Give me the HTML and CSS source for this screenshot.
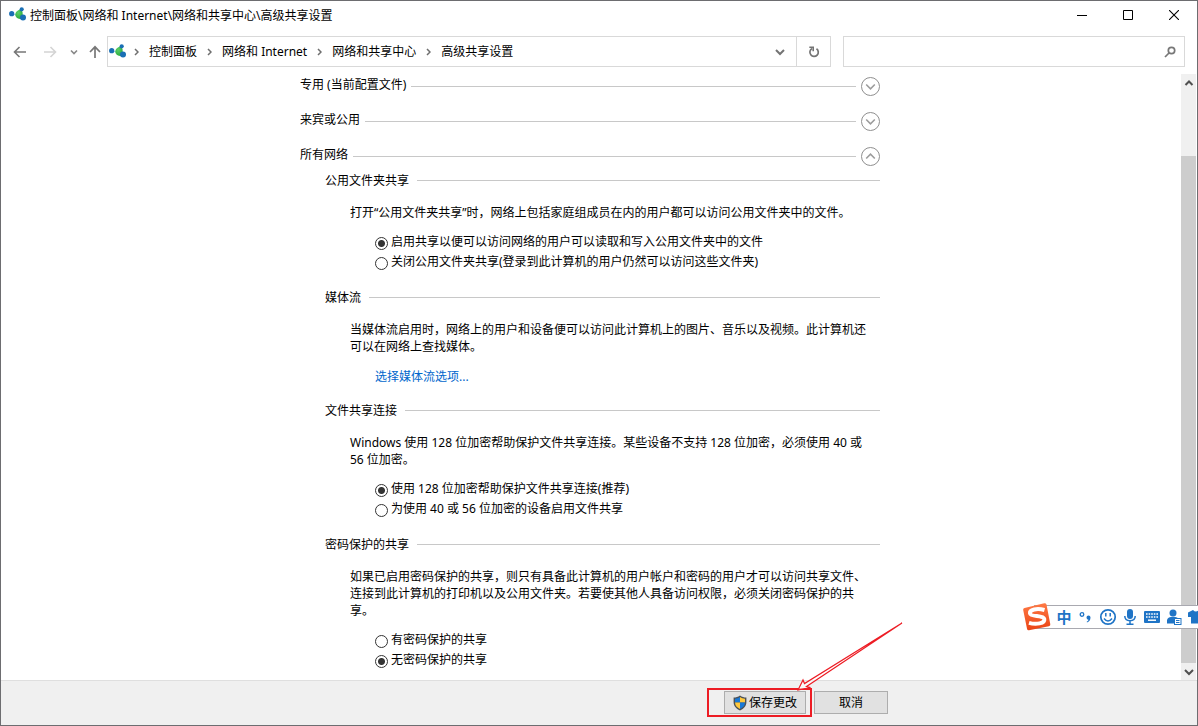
FILE: index.html
```html
<!DOCTYPE html>
<html lang="zh-CN">
<head>
<meta charset="utf-8">
<title>高级共享设置</title>
<link rel="stylesheet" href="styles.css">
</head>
<body>
<svg class="defs" aria-hidden="true">
  <defs>
    <radialGradient id="green" cx="40%" cy="35%" r="70%"><stop offset="0" stop-color="#5fd068"/><stop offset="1" stop-color="#25a83a"/></radialGradient>
    <linearGradient id="orange" x1="0" y1="0" x2="0" y2="1"><stop offset="0" stop-color="#ff7a45"/><stop offset="1" stop-color="#ea4415"/></linearGradient>
    <symbol id="network" viewBox="0 0 18 16">
      <path d="M3 7 9 8 13 3M9 8 14 11" stroke="#9fd8e8" stroke-width="1" fill="none"/>
      <path d="M12 2.500C8 3 5.500 6 6.500 9 8 12 11 12.500 14 11.500L13.500 5Z" fill="url(#green)"/>
      <circle cx="2.700" cy="6.700" r="2.600" fill="#1a6fb5"/>
      <circle cx="12.700" cy="2.300" r="2.100" fill="#1a6fb5"/>
      <circle cx="14" cy="10.500" r="3" fill="#1a6fb5"/>
    </symbol>
    <symbol id="crumb" viewBox="0 0 5 8"><path d="M1 1 4 4 1 7" fill="none" stroke="#6f6f6f" stroke-width="1.500"/></symbol>
    <symbol id="down" viewBox="0 0 10 10"><path d="M1 3 5 7 9 3" fill="none" stroke="currentColor" stroke-width="2"/></symbol>
    <symbol id="up" viewBox="0 0 10 10"><path d="M1.500 7 5 3.500 8.500 7" fill="none" stroke="currentColor" stroke-width="2"/></symbol>
    <symbol id="expand" viewBox="0 0 11 11"><path d="M1.200 3.500 5.500 7.800 9.800 3.500" fill="none" stroke="currentColor" stroke-width="1.600"/></symbol>
    <symbol id="collapse" viewBox="0 0 11 11"><path d="M1.200 7.500 5.500 3.200 9.800 7.500" fill="none" stroke="currentColor" stroke-width="1.600"/></symbol>
  </defs>
</svg>
<div class="window">
  <header class="titlebar">
    <svg class="network" aria-hidden="true"><use href="#network"/></svg>
    <h1 class="title">控制面板\网络和 Internet\网络和共享中心\高级共享设置</h1>
    <button class="caption" aria-label="最小化"><svg width="10" height="10"><path d="M0 5.500H10" stroke="#000"/></svg></button>
    <button class="caption" aria-label="最大化"><svg width="10" height="10"><path d="M.5.5H9.500V9.500H.5Z" stroke="#000" fill="none"/></svg></button>
    <button class="caption" aria-label="关闭"><svg width="10" height="10"><path d="M0 0 10 10M10 0 0 10" stroke="#000" stroke-width="1.100"/></svg></button>
  </header>

  <nav class="navbar">
    <div class="history">
      <button class="plain" aria-label="后退"><svg width="14" height="12"><path d="M13 6H2M6.500 1 1.500 6 6.500 11" fill="none" stroke="#777" stroke-width="1.600"/></svg></button>
      <button class="plain forward" aria-label="前进"><svg width="14" height="12"><path d="M1 6H12M7.500 1 12.500 6 7.500 11" fill="none" stroke="#d4d4d4" stroke-width="1.600"/></svg></button>
      <button class="plain recent" aria-label="最近的位置"><svg width="8" height="6"><path d="M1 1.500 4 4.500 7 1.500" fill="none" stroke="#888" stroke-width="1.600"/></svg></button>
      <button class="plain" aria-label="向上"><svg width="12" height="14"><path d="M6 13V2M1 7 6 1.800 11 7" fill="none" stroke="#777" stroke-width="1.700"/></svg></button>
    </div>
    <div class="address">
      <div class="crumbs">
        <svg class="network" aria-hidden="true"><use href="#network"/></svg>
        <svg class="sep" aria-hidden="true"><use href="#crumb"/></svg>
        <a href="#">控制面板</a>
        <svg class="sep" aria-hidden="true"><use href="#crumb"/></svg>
        <a href="#">网络和 Internet</a>
        <svg class="sep" aria-hidden="true"><use href="#crumb"/></svg>
        <a href="#">网络和共享中心</a>
        <svg class="sep" aria-hidden="true"><use href="#crumb"/></svg>
        <a href="#">高级共享设置</a>
      </div>
      <button class="plain drop" aria-label="以前的位置"><svg width="10" height="10"><use href="#down"/></svg></button>
      <button class="plain refresh" aria-label="刷新"><svg width="12" height="12"><path d="M8.500 2.800A4.200 4.200 0 1 1 4 2.600" fill="none" stroke="#747474" stroke-width="1.700"/><path d="M1.300 1.300H5.200V5.300" fill="none" stroke="#747474" stroke-width="1.600"/></svg></button>
    </div>
    <div class="search">
      <input type="search" aria-label="搜索控制面板">
      <button class="plain" aria-label="搜索"><svg width="12" height="12"><circle cx="7.500" cy="4.500" r="3.200" fill="none" stroke="#777" stroke-width="1.700"/><path d="M5 7 1 11" stroke="#777" stroke-width="1.700"/></svg></button>
    </div>
  </nav>

  <div class="viewport">
    <main class="content">
      <div class="profiles">
        <h2 class="profile"><span>专用 (当前配置文件)</span><i></i><button class="toggle" aria-label="展开专用"><svg width="11" height="11"><use href="#expand"/></svg></button></h2>
        <h2 class="profile"><span>来宾或公用</span><i></i><button class="toggle" aria-label="展开来宾或公用"><svg width="11" height="11"><use href="#expand"/></svg></button></h2>
        <h2 class="profile"><span>所有网络</span><i></i><button class="toggle" aria-label="折叠所有网络"><svg width="11" height="11"><use href="#collapse"/></svg></button></h2>
      </div>
      <div class="sections">
        <section>
          <h3 class="group">公用文件夹共享</h3>
          <p>打开“公用文件夹共享”时，网络上包括家庭组成员在内的用户都可以访问公用文件夹中的文件。</p>
          <div class="options">
            <label><input type="radio" name="public" checked><span>启用共享以便可以访问网络的用户可以读取和写入公用文件夹中的文件</span></label>
            <label><input type="radio" name="public"><span>关闭公用文件夹共享(登录到此计算机的用户仍然可以访问这些文件夹)</span></label>
          </div>
        </section>
        <section>
          <h3 class="group">媒体流</h3>
          <p>当媒体流启用时，网络上的用户和设备便可以访问此计算机上的图片、音乐以及视频。此计算机还可以在网络上查找媒体。</p>
          <a class="link" href="#">选择媒体流选项...</a>
        </section>
        <section>
          <h3 class="group">文件共享连接</h3>
          <p>Windows 使用 128 位加密帮助保护文件共享连接。某些设备不支持 128 位加密，必须使用 40 或 56 位加密。</p>
          <div class="options">
            <label><input type="radio" name="cipher" checked><span>使用 128 位加密帮助保护文件共享连接(推荐)</span></label>
            <label><input type="radio" name="cipher"><span>为使用 40 或 56 位加密的设备启用文件共享</span></label>
          </div>
        </section>
        <section>
          <h3 class="group">密码保护的共享</h3>
          <p>如果已启用密码保护的共享，则只有具备此计算机的用户帐户和密码的用户才可以访问共享文件、连接到此计算机的打印机以及公用文件夹。若要使其他人具备访问权限，必须关闭密码保护的共享。</p>
          <div class="options">
            <label><input type="radio" name="password"><span>有密码保护的共享</span></label>
            <label><input type="radio" name="password" checked><span>无密码保护的共享</span></label>
          </div>
        </section>
      </div>
    </main>
    <div class="scrollbar">
      <button class="plain" aria-label="向上滚动"><svg width="10" height="10"><use href="#up"/></svg></button>
      <div class="track"></div>
      <div class="thumb"></div>
      <button class="plain" aria-label="向下滚动"><svg width="10" height="10"><use href="#down"/></svg></button>
    </div>
  </div>

  <footer class="footer">
    <div class="actions">
      <div class="marked">
        <button class="push"><svg width="14" height="16" viewBox="0 0 14 16" aria-hidden="true"><path d="M7 .5C5 2 3 2.500.6 2.500V7C.6 11 3 13.800 7 15.500 11 13.800 13.400 11 13.400 7V2.500C11 2.500 9 2 7 .5Z" fill="#4b5157"/><path d="M7 2C5.500 3 3.800 3.600 2 3.700V7.500H7Z" fill="#1778d8"/><path d="M7 2C8.500 3 10.200 3.600 12 3.700V7.500H7Z" fill="#ffc83d"/><path d="M2 7.500H7V14C4 12.600 2.200 10.600 2 7.500Z" fill="#ffc83d"/><path d="M12 7.500H7V14C10 12.600 11.800 10.600 12 7.500Z" fill="#1778d8"/></svg>保存更改</button>
        <svg class="arrow" width="106" height="70" viewBox="0 0 106 70" aria-hidden="true"><path d="M105 1 7.500 61.500 6 58 1 68 13.500 65.500 9.500 64.500Z" fill="#fff" fill-opacity=".6" stroke="#ed1c24" stroke-width="1.200"/></svg>
      </div>
      <button class="push cancel">取消</button>
    </div>
  </footer>
</div>

<aside class="ime">
  <svg class="sogou" width="30" height="30" viewBox="0 0 30 30" aria-hidden="true"><path d="M2.500 6Q.8 6.400 1.200 8L5 26.800Q5.400 28.600 7 28.300L26.800 24.300Q28.600 23.800 28.300 22.200L24.500 2.600Q24 .9 22.200 1.300Z" fill="url(#orange)"/><path d="M22.500 8C15 6 7.300 7.500 8 11.500 8.700 15.300 21.500 12.700 22.300 17 23 21.500 14 22.800 7 20.800" fill="none" stroke="#fff" stroke-width="4"/></svg>
  <div class="tools">
    <button class="plain zh">中</button>
    <button class="plain" aria-label="标点"><svg width="18" height="18"><circle cx="5" cy="6.500" r="1.800" fill="none" stroke="#1f74c6" stroke-width="1.300"/><path d="M9.500 9.500A2 2 0 0 1 13.500 9.500C13.500 12 12 14 10 14.500L9.700 13.700C10.800 13.200 11.500 12.500 11.500 11.700 10.300 11.700 9.500 10.700 9.500 9.500Z" fill="#1f74c6"/></svg></button>
    <button class="plain" aria-label="表情"><svg width="18" height="18"><circle cx="9" cy="9" r="7.200" fill="none" stroke="#1f74c6" stroke-width="1.700"/><path d="M6.800 5V8.500M11.200 5V8.500M5 10.500Q9 15.500 13 10.500" fill="none" stroke="#1f74c6" stroke-width="1.500"/></svg></button>
    <button class="plain" aria-label="语音"><svg width="18" height="18"><rect x="6" y="1" width="6" height="10" rx="3" fill="#1f74c6"/><path d="M3.800 8Q3.800 12.700 9 12.700T14.200 8M9 13V16M5.500 16.200H12.500" fill="none" stroke="#1f74c6" stroke-width="1.500"/></svg></button>
    <button class="plain" aria-label="软键盘"><svg width="18" height="18"><rect x="1" y="3" width="16" height="12" rx="1" fill="#1f74c6"/><path d="M3 6H15M3 9H15" stroke="#fff" stroke-width="1.600" stroke-dasharray="1.600 1"/><path d="M5 12.200H13" stroke="#fff" stroke-width="1.500"/></svg></button>
    <button class="plain" aria-label="用户"><svg width="18" height="18"><circle cx="8" cy="5" r="3.500" fill="#1f74c6"/><path d="M2 15.500V12Q3 8.700 8 8.700T14 12V15.500Z" fill="#1f74c6"/><rect x="9.500" y="10.500" width="6.500" height="6" fill="#fff" stroke="#1f74c6"/><path d="M11 12.500H14.500M11 14.500H14.500" stroke="#1f74c6"/></svg></button>
    <button class="plain" aria-label="皮肤"><svg width="18" height="18"><path d="M6 2 1 4.500V9H4V15.500H14V9H17V4.500L12 2Q9 5 6 2Z" fill="#1f74c6"/></svg></button>
  </div>
</aside>
</body>
</html>
```
FILE: styles.css
```css
* { box-sizing: border-box; }

body {
  margin: 0;
  position: relative;
  overflow: hidden;
  background: #fff;
  color: #000;
  font: 12px/17px "Noto Sans", "Noto Sans CJK SC", sans-serif;
}

h1, h2, h3, p { margin: 0; font-size: 12px; font-weight: 400; }
svg { display: block; flex: none; }
button, input { font: inherit; color: inherit; }
a { color: inherit; text-decoration: none; }
.defs { position: absolute; width: 0; height: 0; }

.plain {
  display: flex;
  align-items: center;
  justify-content: center;
  padding: 0;
  border: 0;
  background: none;
  color: #747474;
}

.window {
  display: flex;
  flex-direction: column;
  min-height: 100vh;
  border: 1px solid #6d6d70;
}

.titlebar { display: flex; align-items: center; height: 30px; padding: 0 0 2px 8px; }
.network { width: 18px; height: 16px; }
.title { flex: 1; padding-left: 3px; }
.caption {
  display: flex;
  align-items: center;
  justify-content: center;
  width: 46px;
  height: 28px;
  padding: 0;
  border: 0;
  background: none;
}

.navbar { display: flex; gap: 12px; height: 43px; padding: 5px 12px 7px 12px; }
.history { display: flex; align-items: center; gap: 16px; margin-right: -6px; }
.recent { margin: 0 -5px 0 -3px; }
.address { display: flex; flex: 1; border: 1px solid #d9d9d9; }
.crumbs { display: flex; flex: 1; align-items: center; gap: 10px; padding-left: 1px; }
.crumbs .network { margin-right: -3px; }
.crumbs a { padding-bottom: 1px; }
.sep { width: 5px; height: 8px; }
.drop { width: 32px; }
.refresh { width: 34px; border-left: 1px solid #d9d9d9; }
.search { display: flex; flex: 0 1 342px; padding-right: 8px; border: 1px solid #d9d9d9; }
.search input { flex: 1; min-width: 0; border: 0; outline: 0; background: none; }

.viewport { display: flex; flex: 1; }
.content { flex: 1; max-width: 582px; margin: 0 auto; padding: 3px 2px 10px 0; }
.profiles { display: flex; flex-direction: column; gap: 16px; }
.profile { display: flex; align-items: center; gap: 5px; height: 19px; }
.profile span { padding-bottom: 4px; }
.profile i { flex: 1; height: 1px; background: #c8c8c8; }
.toggle {
  display: flex;
  align-items: center;
  justify-content: center;
  width: 19px;
  height: 19px;
  padding: 0;
  border: 1px solid #8f8f8f;
  border-radius: 50%;
  background: #fff;
  color: #9c9c9c;
}

.sections { display: flex; flex-direction: column; gap: 17px; padding: 6px 0 0 25px; }
.group { display: flex; align-items: center; gap: 8px; }
.group::after { content: ""; flex: 1; height: 1px; background: #c8c8c8; }
.sections p { padding: 15px 4px 0 25px; }
.options { display: flex; flex-direction: column; padding: 11px 0 0 50px; }
.options label { display: flex; align-items: center; gap: 3px; height: 20px; }
.options span { padding-bottom: 1px; }
.options input {
  appearance: none;
  width: 13px;
  height: 13px;
  margin: 2px 0 0;
  border: 1px solid #333;
  border-radius: 50%;
  background: #fff;
}
.options input:checked { background: radial-gradient(circle, #333 3px, #fff 4px); }
.link { display: block; padding: 13px 0 0 50px; color: #0066cc; }

.scrollbar { display: flex; flex-direction: column; width: 16px; border-right: 1px solid #fff; background: #f0f0f0; }
.scrollbar button { height: 17px; color: #505050; }
.track { flex: 65; }
.thumb { flex: 507; background: #cdcdcd; }

.footer { height: 45px; border-top: 1px solid #dfdfdf; background: #f0f0f0; }
.actions { display: flex; align-items: center; justify-content: flex-end; gap: 2px; max-width: 578px; height: 43px; margin: 0 auto; }
.marked { position: relative; padding: 1px 4px 1px 15px; border: 2px solid #ed1c24; }
.push {
  display: flex;
  align-items: center;
  justify-content: center;
  gap: 2px;
  width: 82px;
  height: 23px;
  padding: 0;
  border: 1px solid #adadad;
  background: #e1e1e1;
}
.cancel { width: 74px; }
.arrow { position: absolute; right: -93px; bottom: 23px; }

.ime { position: absolute; top: 602px; right: 0; display: flex; align-items: center; width: 176px; height: 30px; overflow: hidden; }
.sogou { position: relative; z-index: 1; }
.tools {
  display: flex;
  flex: none;
  gap: 4px;
  height: 24px;
  margin-left: -18px;
  padding-left: 21px;
  border: solid #a9a9b0;
  border-width: 1px 0;
  background: #fff;
}
.tools button { flex: none; width: 18px; }
.tools .zh { color: #1f74c6; font-size: 15px; font-weight: 700; }
```
